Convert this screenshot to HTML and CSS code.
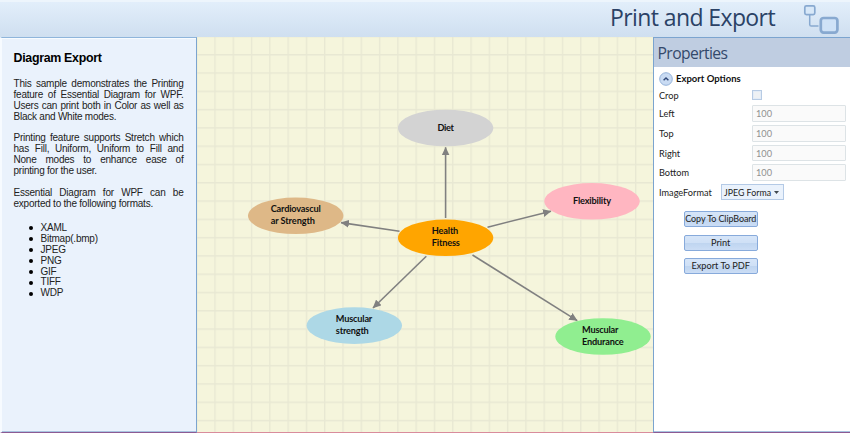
FILE: index.html
```html
<!DOCTYPE html>
<html lang="en">
<head>
<meta charset="utf-8">
<title>Print and Export</title>
<link rel="stylesheet" href="styles.css">
</head>
<body>
<div class="app">
  <header class="header">
    <h1 class="title">Print and Export</h1>
    <svg class="logo" width="38" height="32" viewBox="0 0 38 32" fill="none">
      <path d="M8.7 12v10.4q0 1.6 1.6 1.6h7.2" stroke="#88a9d0" stroke-width="1.5"/>
      <rect x="3.8" y="3.8" width="10" height="8.8" rx="1.6" stroke="#88a9d0" stroke-width="1.7" fill="#d8e8f8"/>
      <rect x="19.8" y="16" width="16.6" height="14.6" rx="2.8" stroke="#88a9d0" stroke-width="2.7" fill="#cfe2f7"/>
    </svg>
  </header>
  <div class="body">
    <aside class="description">
      <h2 class="heading">Diagram Export</h2>
      <p class="para"><span>This sample demonstrates the Printing</span><span>feature of Essential Diagram for WPF.</span><span>Users can print both in Color as well as</span><span class="last">Black and White modes.</span></p>
      <p class="para"><span>Printing feature supports Stretch which</span><span>has Fill, Uniform, Uniform to Fill and</span><span>None modes to enhance ease of</span><span class="last">printing for the user.</span></p>
      <p class="para"><span>Essential Diagram for WPF can be</span><span class="last">exported to the following formats.</span></p>
      <ul class="formats">
        <li>XAML</li><li>Bitmap(.bmp)</li><li>JPEG</li><li>PNG</li><li>GIF</li><li>TIFF</li><li>WDP</li>
      </ul>
    </aside>
    <main class="canvas">
      <svg class="diagram" width="456" height="395" viewBox="197 37 456 395">
        <defs>
          <pattern id="grid" x="214.3" y="54" width="18.29" height="18.29" patternUnits="userSpaceOnUse">
            <path d="M.7 0V18.29M0 .7H18.29" stroke="#e8e8d3" stroke-width="1.4"/>
          </pattern>
          <marker id="arrow" markerUnits="userSpaceOnUse" markerWidth="9" markerHeight="8" refX="8" refY="4" orient="auto">
            <path d="M0 .1L8.4 4L0 7.9z" fill="#808080"/>
          </marker>
        </defs>
        <rect x="197" y="37" width="456" height="395" fill="#f5f5dc"/>
        <rect x="197" y="37" width="456" height="395" fill="url(#grid)"/>
        <g class="links">
          <path d="M445.6 218V147.3"/>
          <path d="M399.5 231.3L341 222.6"/>
          <path d="M487.5 227.2L551 211.2"/>
          <path d="M426.3 256.2L373 308"/>
          <path d="M472.5 255L577.2 320.6"/>
        </g>
        <ellipse cx="445.6" cy="128" rx="47.7" ry="18.3" fill="#d3d3d3"/>
        <ellipse cx="445.6" cy="237.8" rx="47.7" ry="18.3" fill="#ffa500"/>
        <ellipse cx="295.7" cy="215.8" rx="47.7" ry="18.3" fill="#deb887"/>
        <ellipse cx="592" cy="201.3" rx="47.7" ry="18.3" fill="#ffb6c1"/>
        <ellipse cx="354.3" cy="325.6" rx="47.7" ry="18.3" fill="#add8e6"/>
        <ellipse cx="603" cy="336.5" rx="47.7" ry="18.3" fill="#90ee90"/>
        <g class="labels">
          <text x="437.4" y="130.5" textLength="16.5">Diet</text>
          <text x="431.8" y="234.4" textLength="26.5">Health</text>
          <text x="431.8" y="246.3" textLength="28">Fitness</text>
          <text x="270.7" y="212.4" textLength="50">Cardiovascul</text>
          <text x="270.7" y="224.2" textLength="44.3">ar Strength</text>
          <text x="573" y="203.7" textLength="38">Flexibility</text>
          <text x="335.8" y="322" textLength="36.5">Muscular</text>
          <text x="335.8" y="333.8" textLength="33">strength</text>
          <text x="582" y="333" textLength="36.5">Muscular</text>
          <text x="582" y="344.9" textLength="41.7">Endurance</text>
        </g>
      </svg>
    </main>
    <aside class="properties">
      <h2 class="properties-title">Properties</h2>
      <div class="group">
        <svg width="14" height="14" viewBox="0 0 14 14"><circle cx="7" cy="7" r="6.3" fill="#c9dbf3" stroke="#94b2d9"/><path d="M4.6 8.3L7 5.9L9.4 8.3" fill="none" stroke="#304878" stroke-width="1.4"/></svg>
        <span>Export Options</span>
      </div>
      <div class="field crop"><label>Crop</label><i class="check"></i></div>
      <div class="field"><label>Left</label><div class="input">100</div></div>
      <div class="field"><label>Top</label><div class="input">100</div></div>
      <div class="field"><label>Right</label><div class="input">100</div></div>
      <div class="field"><label>Bottom</label><div class="input">100</div></div>
      <div class="field format"><label>ImageFormat</label><div class="select"><span>JPEG Forma</span><svg width="5" height="3" viewBox="0 0 5 3"><path d="M0 0h5L2.5 3z" fill="#404850"/></svg></div></div>
      <div class="buttons">
        <div class="button copy">Copy To ClipBoard</div>
        <div class="button">Print</div>
        <div class="button">Export To PDF</div>
      </div>
    </aside>
  </div>
</div>
</body>
</html>
```
FILE: styles.css
```css
* { box-sizing: border-box; }
body { margin: 0; }
h1, h2, p, ul { margin: 0; padding: 0; font-weight: normal; }

.app {
  width: 850px;
  height: 433px;
  display: flex;
  flex-direction: column;
  overflow: hidden;
  font-family: Lato, "Open Sans", sans-serif;
}

.header {
  height: 37px;
  flex: none;
  display: flex;
  justify-content: flex-end;
  padding-right: 11px;
  background: linear-gradient(#e3effb, #cfdff0);
  box-shadow: inset 0 2px 0 #edf5fc;
}
.title {
  font-family: "Open Sans", "Noto Sans", sans-serif;
  font-size: 23px;
  line-height: 35px;
  letter-spacing: -0.6px;
  color: #2b4266;
  margin-right: 26px;
  white-space: nowrap;
}
.logo { margin-top: 2px; }

.body { display: flex; flex: 1; min-height: 0; }

.description {
  width: 197px;
  flex: none;
  padding: 13px 13px 0 11.5px;
  background: #eaf2fc;
  border-top: 1px solid #8fb5db;
  border-right: 1px solid #7ba4cf;
  border-left: 2px solid #f7fbff;
  border-bottom: 1px solid #8c5a93;
  box-shadow: inset 0 1px 0 #f7fbff, inset 0 -1px 0 #a9c4e1;
  font-family: "Liberation Sans", Arial, sans-serif;
  font-size: 10px;
  letter-spacing: -0.23px;
  line-height: 11px;
  color: #222;
}
.heading {
  font-size: 12.4px;
  letter-spacing: -0.3px;
  line-height: 15px;
  font-weight: bold;
  color: #000;
  margin-bottom: 11.5px;
}
.para { margin-bottom: 10.8px; width: 170px; }
.para span { display: block; text-align-last: justify; white-space: nowrap; }
.para .last { text-align-last: left; }
.formats {
  margin-top: 13.8px;
  padding-left: 26.5px;
  list-style: none;
  line-height: 10.9px;
}
.formats li { display: flex; align-items: center; }
.formats li::before {
  content: "";
  width: 4px;
  height: 4px;
  margin: 0 7.5px 0 -11px;
  border-radius: 50%;
  background: #000;
}

.canvas { width: 456px; flex: none; border-bottom: 1px solid #d98c9c; background: #f5f5dc; }
.diagram { display: block; }
.links path { fill: none; stroke: #808080; stroke-width: 1.6; marker-end: url(#arrow); }
.labels { font-size: 9.2px; font-weight: bold; fill: #111; }

.properties {
  flex: 1;
  background: #fff;
  border-top: 1px solid #7ba4cf;
  border-left: 1px solid #7ba4cf;
  border-bottom: 1px solid #8c5a93;
  box-shadow: inset 0 -1px 0 #a9c4e1;
  font-size: 9.2px;
  color: #222;
  white-space: nowrap;
}
.properties-title {
  height: 29px;
  padding-left: 3.5px;
  line-height: 30px;
  font-family: "Open Sans", "Noto Sans", sans-serif;
  font-size: 15.7px;
  letter-spacing: -0.6px;
  color: #34496b;
  background: #bfcde1;
}
.group {
  height: 21px;
  padding: 2px 0 0 5px;
  display: flex;
  align-items: center;
  gap: 3px;
  font-size: 9.5px;
  font-weight: bold;
  color: #111;
}
.field { height: 19.7px; padding-left: 5px; display: flex; align-items: center; }
.field label { width: 93px; flex: none; }
.crop { height: 15.8px; }
.check { width: 10px; height: 10px; margin-top: -1px; border: 1px solid #b7cbe4; background: #eef1f4; box-shadow: inset 0 0 0 1px #e3ecf7; }
.input {
  width: 94px;
  height: 16.5px;
  padding-left: 3px;
  border: 1px solid #dde3e6;
  border-radius: 1px;
  background: #fafafa;
  color: #909090;
  line-height: 15px;
}
.format label { width: 61.5px; }
.select {
  width: 63px;
  height: 16px;
  padding: 0 4px 0 2.5px;
  display: flex;
  align-items: center;
  justify-content: space-between;
  border: 1px solid #b4cae6;
  background: #eaf2fc;
  font-size: 8.8px;
}
.buttons { margin: 9px 0 0 30px; display: flex; flex-direction: column; gap: 7.2px; }
.button {
  width: 73.5px;
  height: 16.2px;
  border: 1px solid #87aadb;
  border-radius: 2px;
  background: linear-gradient(#d6e5f8 0%, #cfe0f6 48%, #bfd5f0 52%, #cbddf5 100%);
  text-align: center;
  line-height: 14.5px;
}
.copy { font-size: 9px; letter-spacing: -0.1px; }
```
